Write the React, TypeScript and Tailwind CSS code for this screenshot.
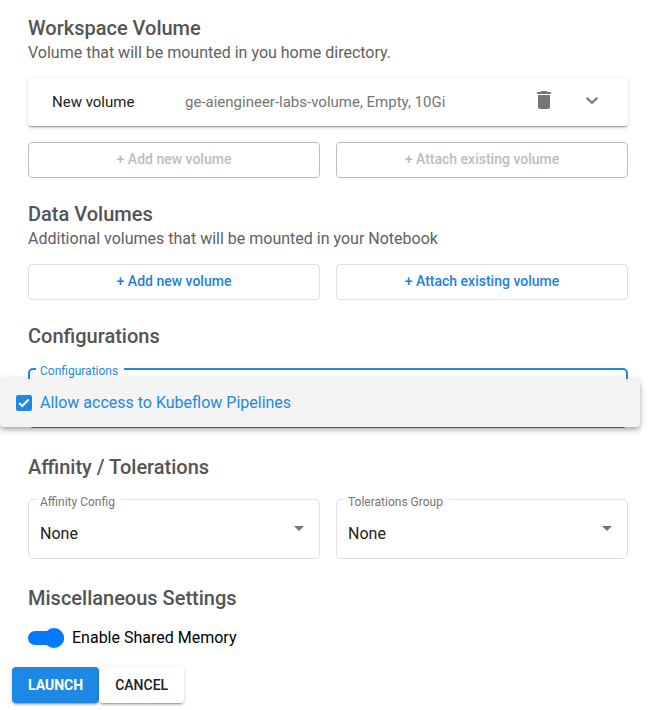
import { useState } from "react";
import type { ReactNode } from "react";

const raised =
  "shadow-[0_3px_1px_-2px_rgba(0,0,0,0.2),0_2px_2px_0_rgba(0,0,0,0.14),0_1px_5px_0_rgba(0,0,0,0.12)]";

function SectionTitle({ children }: { children: ReactNode }) {
  return <h2 className="text-xl leading-6 font-medium text-[#545454]">{children}</h2>;
}

function SectionNote({ children }: { children: ReactNode }) {
  return <p className="mb-[13px] pt-px text-base text-[#616161]">{children}</p>;
}

function VolumeActions({ disabled = false }: { disabled?: boolean }) {
  const tone = disabled
    ? "border-[#bdbdbd] text-[#bdbdbd]"
    : "border-[#e0e0e0] text-[#1e7fe5]";
  return (
    <div className="grid grid-cols-2 gap-4">
      <button type="button" disabled={disabled} className={`h-9 rounded border pb-0.5 text-sm font-medium ${tone}`}>
        + Add new volume
      </button>
      <button type="button" disabled={disabled} className={`h-9 rounded border pb-0.5 text-sm font-medium ${tone}`}>
        + Attach existing volume
      </button>
    </div>
  );
}

function SelectField({ id, label }: { id: string; label: string }) {
  return (
    <div className="relative">
      <select
        id={id}
        className="block h-[60px] w-full appearance-none rounded-[5px] border border-[#e0e0e0] bg-white pt-2.5 pl-[11px] text-base text-[#212121]"
      >
        <option>None</option>
      </select>
      <label htmlFor={id} className="absolute -top-[5px] left-2 h-4 bg-white pr-1.5 pl-1 text-xs leading-4 text-[#757575]">
        {label}
      </label>
      <svg viewBox="0 0 10 5" className="pointer-events-none absolute top-[27px] right-4 h-[5px] w-2.5" fill="#757575">
        <path d="M0 0h10L5 5z" />
      </svg>
    </div>
  );
}

export default function App() {
  const [pipelines, setPipelines] = useState(true);
  const [shared, setShared] = useState(true);

  return (
    <main className="bg-white pt-4 pb-[7px] font-['Roboto','Liberation_Sans',sans-serif] text-[#212121]">
      <div className="pr-[34px] pl-7">
        <section>
          <SectionTitle>Workspace Volume</SectionTitle>
          <SectionNote>Volume that will be mounted in you home directory.</SectionNote>
          <div className={`mb-4 flex h-12 items-center rounded px-6 ${raised}`}>
            <span className="w-[133px] text-[15px]">New volume</span>
            <span className="grow text-[15px] text-[#757575]">
              ge-aiengineer-labs-volume, Empty, 10Gi
            </span>
            <button type="button" aria-label="Delete volume" className="mr-6 mb-1">
              <svg viewBox="0 0 24 24" className="size-6" fill="#757575">
                <path d="M6 19c0 1.1.9 2 2 2h8c1.1 0 2-.9 2-2V7H6v12zM19 4h-3.500l-1-1h-5l-1 1H5v2h14V4z" />
              </svg>
            </button>
            <button type="button" aria-label="Expand volume" className="mb-1">
              <svg viewBox="0 0 24 24" className="size-6" fill="none" stroke="#757575" strokeWidth="2">
                <path d="M6.700 9.700l5.300 5.100 5.300-5.100" />
              </svg>
            </button>
          </div>
          <VolumeActions disabled />
        </section>

        <section className="mt-6">
          <SectionTitle>Data Volumes</SectionTitle>
          <SectionNote>Additional volumes that will be mounted in your Notebook</SectionNote>
          <VolumeActions />
        </section>

        <section className="mt-6">
          <SectionTitle>Configurations</SectionTitle>
          <div className="relative mt-5">
            <button
              type="button"
              aria-labelledby="configurations-label"
              aria-expanded="true"
              className="block h-[60px] w-full rounded-[5px] border-2 border-[#1e88e5]"
            />
            <span
              id="configurations-label"
              className="absolute -top-[5px] left-2 h-4 bg-white pr-1.5 pl-1 text-xs leading-4 text-[#1e88e5]"
            >
              Configurations
            </span>
            <div className="absolute top-[11px] -right-3 -left-7 rounded bg-[#f4f4f4] shadow-[0_2px_4px_-1px_rgba(0,0,0,0.2),0_4px_5px_0_rgba(0,0,0,0.14),0_1px_10px_0_rgba(0,0,0,0.12)]">
              <label className="flex h-12 items-center gap-2 px-4 text-base text-[#1e88e5]">
                <span className="relative size-4">
                  <input
                    type="checkbox"
                    checked={pipelines}
                    onChange={(e) => setPipelines(e.target.checked)}
                    className="block size-4 appearance-none rounded-xs border-2 border-[#757575] checked:border-[#1e88e5] checked:bg-[#1e88e5]"
                  />
                  {pipelines && (
                    <svg viewBox="0 0 16 16" className="pointer-events-none absolute inset-0" fill="none" stroke="#fff" strokeWidth="2">
                      <path d="M3.200 8l3 3 6.500-6.500" />
                    </svg>
                  )}
                </span>
                Allow access to Kubeflow Pipelines
              </label>
            </div>
          </div>
        </section>

        <section className="mt-[27px]">
          <SectionTitle>Affinity / Tolerations</SectionTitle>
          <div className="mt-5 grid grid-cols-2 gap-4">
            <SelectField id="affinity" label="Affinity Config" />
            <SelectField id="tolerations" label="Tolerations Group" />
          </div>
        </section>

        <section className="mt-[27px]">
          <SectionTitle>Miscellaneous Settings</SectionTitle>
          <label className="mt-4 flex w-fit items-center gap-2 text-base text-black">
            <span className="relative flex h-5 w-9 items-center">
              <input
                type="checkbox"
                role="switch"
                checked={shared}
                onChange={(e) => setShared(e.target.checked)}
                className="peer h-3.5 w-9 appearance-none rounded-full bg-[#bdbdbd] checked:bg-[#007bff]"
              />
              <span className="pointer-events-none absolute left-0 size-5 rounded-full bg-white shadow-sm peer-checked:left-4 peer-checked:bg-[#007bff]" />
            </span>
            Enable Shared Memory
          </label>
        </section>
      </div>

      <div className="mt-[17px] flex pl-3 text-sm font-medium">
        <button type="button" className={`h-9 rounded bg-[#1e88e5] px-4 font-bold text-white ${raised}`}>
          LAUNCH
        </button>
        <button type="button" className={`h-9 rounded bg-white px-4 ${raised}`}>
          CANCEL
        </button>
      </div>
    </main>
  );
}
